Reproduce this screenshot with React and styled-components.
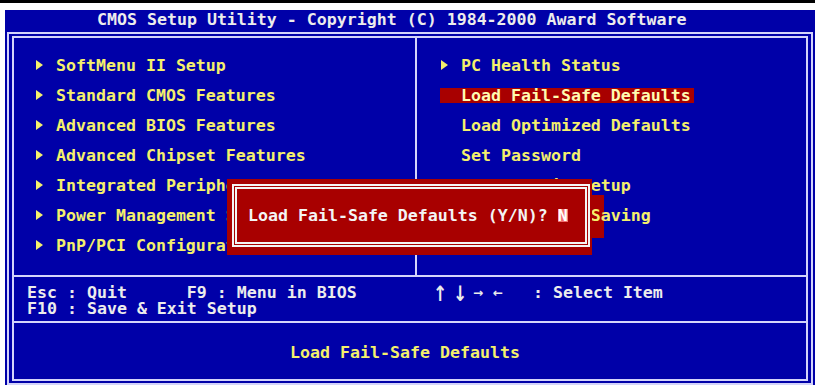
import React from 'react'
import styled, { createGlobalStyle } from 'styled-components'

const BLUE = '#0000a8'
const RED = '#a80000'
const LINE = '#d4d4fa'
const YELLOW = '#f4f06c'
const WHITE = '#ececec'

const GlobalStyle = createGlobalStyle`
  html, body {
    margin: 0;
    padding: 0;
    background: #fff;
  }
`

const leftItems = [
  { label: 'SoftMenu II Setup', sub: true },
  { label: 'Standard CMOS Features', sub: true },
  { label: 'Advanced BIOS Features', sub: true },
  { label: 'Advanced Chipset Features', sub: true },
  { label: 'Integrated Peripherals', sub: true },
  { label: 'Power Management Setup', sub: true },
  { label: 'PnP/PCI Configurations', sub: true },
]

const rightItems = [
  { label: 'PC Health Status', sub: true },
  { label: 'Load Fail-Safe Defaults', active: true },
  { label: 'Load Optimized Defaults' },
  { label: 'Set Password' },
  { label: 'Save & Exit Setup' },
  { label: 'Exit Without Saving' },
]

const App = () => {
  return (
    <>
      <GlobalStyle />
      <Page>
        <Screen>
          <TitleBar>CMOS Setup Utility - Copyright (C) 1984-2000 Award Software</TitleBar>
          <Frame>
            <Inner>
              <Main>
                <MenuColumn $pad={21}>
                  {leftItems.map((it) => (
                    <Row key={it.label}>
                      <Item $active={it.active}>
                        <Marker>{it.sub && <Arrow />}</Marker>
                        {it.label}
                      </Item>
                    </Row>
                  ))}
                </MenuColumn>
                <Divider />
                <MenuColumn $pad={23}>
                  {rightItems.map((it) => (
                    <Row key={it.label}>
                      <Item $active={it.active}>
                        <Marker>{it.sub && <Arrow />}</Marker>
                        {it.label}
                      </Item>
                    </Row>
                  ))}
                </MenuColumn>
              </Main>
              <Separator />
              <Help>
                <HelpCol $pad={13}>
                  <HelpLine>{'Esc : Quit      F9 : Menu in BIOS'}</HelpLine>
                  <HelpLine>{'F10 : Save & Exit Setup'}</HelpLine>
                </HelpCol>
                <HelpCol $pad={16}>
                  <HelpLine>
                    <Key>↑</Key> <Key>↓</Key> <Key $small>→</Key> <Key $small>←</Key>{'   : Select Item'}
                  </HelpLine>
                </HelpCol>
              </Help>
              <Separator />
              <Status>Load Fail-Safe Defaults</Status>
            </Inner>
          </Frame>
          <Tail />
          <Dialog>
            <DialogOuter>
              <DialogInner>
                Load Fail-Safe Defaults (Y/N)? <Answer>N</Answer>
              </DialogInner>
            </DialogOuter>
          </Dialog>
        </Screen>
      </Page>
    </>
  )
}

const Page = styled.div`
  width: 815px;
  height: 387px;
  box-sizing: border-box;
  border-top: 3px solid #000;
  padding-top: 7px;
  background: #fff;
  overflow: hidden;
`

const Screen = styled.div`
  position: relative;
  margin-left: 5px;
  width: 810px;
  height: 375px;
  background: ${BLUE};
  display: flex;
  flex-direction: column;
  font-family: "DejaVu Sans Mono", monospace;
  font-weight: bold;
  font-size: 16.6px;
  white-space: pre;
`

const TitleBar = styled.div`
  height: 22px;
  line-height: 20px;
  padding-left: 92px;
  color: ${WHITE};
`

const Frame = styled.div`
  flex: 1;
  margin: 0 2px;
  border: 2px solid ${LINE};
  padding: 2px 3px;
  display: flex;
`

const Inner = styled.div`
  flex: 1;
  border: 2px solid ${LINE};
  display: flex;
  flex-direction: column;
`

const Main = styled.div`
  position: relative;
  z-index: 1;
  height: 237px;
  display: grid;
  grid-template-columns: 401px 2px 1fr;
`

const MenuColumn = styled.div`
  padding: 12px 0 0 ${(p) => p.$pad}px;
  display: flex;
  flex-direction: column;
`

const Row = styled.div`
  height: 30px;
  display: flex;
  align-items: center;
`

const Item = styled.div`
  display: flex;
  align-items: center;
  height: 15px;
  padding-right: 3px;
  color: ${(p) => (p.$active ? '#fffbb0' : YELLOW)};
  background: ${(p) => (p.$active ? RED : 'transparent')};
`

const Marker = styled.span`
  width: 21px;
  height: 15px;
  display: flex;
  align-items: center;
  padding-left: 1px;
  box-sizing: border-box;
`

const Arrow = styled.span`
  width: 0;
  height: 0;
  border-left: 7px solid ${YELLOW};
  border-top: 5px solid transparent;
  border-bottom: 5px solid transparent;
`

const Divider = styled.div`
  background: ${LINE};
`

const Separator = styled.div`
  height: 2px;
  background: ${LINE};
`

const Help = styled.div`
  height: 44px;
  box-sizing: border-box;
  padding-top: 8px;
  display: grid;
  grid-template-columns: 403px 1fr;
  color: ${WHITE};
`

const HelpCol = styled.div`
  padding-left: ${(p) => p.$pad}px;
`

const HelpLine = styled.div`
  height: 16px;
  line-height: 16px;
`

const Key = styled.span`
  display: inline-block;
  width: 10px;
  text-align: center;
  font-family: "DejaVu Sans", sans-serif;
  font-size: ${(p) => (p.$small ? '12px' : '17px')};
  line-height: 16px;
  vertical-align: top;
  transform: ${(p) => (p.$small ? 'none' : 'scaleY(1.25)')};
`

const Status = styled.div`
  flex: 1;
  box-sizing: border-box;
  padding: 22px 10px 0 0;
  line-height: 16px;
  text-align: center;
  color: ${YELLOW};
`

const Tail = styled.div`
  position: absolute;
  left: 587px;
  top: 185px;
  width: 12px;
  height: 43px;
  background: ${RED};
  z-index: 0;
`

const Dialog = styled.div`
  position: absolute;
  z-index: 2;
  left: 222px;
  top: 169px;
  width: 365px;
  height: 76px;
  box-sizing: border-box;
  padding: 5px 2px 8px 5px;
  background: ${RED};
  display: flex;
`

const DialogOuter = styled.div`
  flex: 1;
  border: 2px solid #f4f4f4;
  padding: 1px;
  display: flex;
`

const DialogInner = styled.div`
  flex: 1;
  border: 2px solid #f4f4f4;
  padding-left: 11px;
  display: flex;
  align-items: center;
  color: #f4f4f4;
`

const Answer = styled.span`
  display: inline-block;
  height: 13px;
  line-height: 13px;
  background: #f07070;
  color: #fff;
`

export default App
